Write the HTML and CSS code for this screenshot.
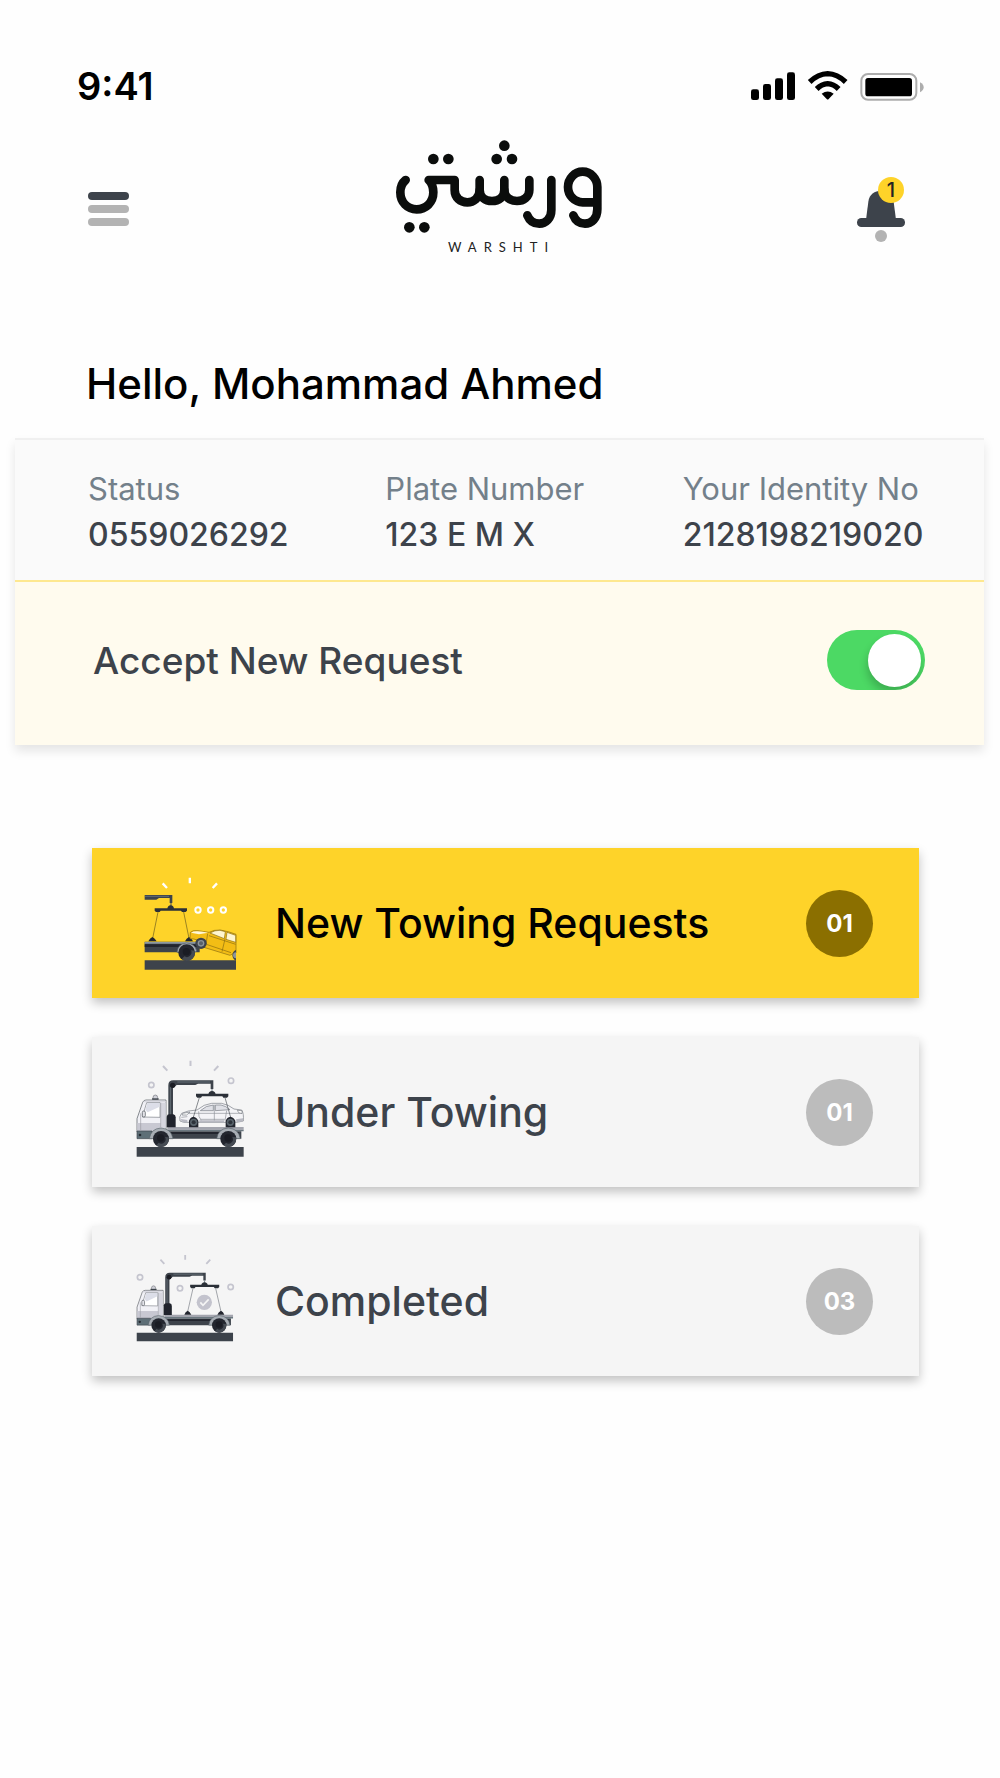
FILE: index.html
```html
<!DOCTYPE html>
<html lang="en">
<head>
<meta charset="utf-8">
<meta name="viewport" content="width=device-width, initial-scale=1">
<title>Warshti</title>
<link rel="stylesheet" href="styles.css">
</head>
<body>
<svg class="sprite" aria-hidden="true">
  <defs>
    <!-- Flatbed truck with crane, shared by two of the cards -->
    <g id="truck">
      <g stroke="#c5c5cf" stroke-width="6" fill="none">
        <path d="M199.500 32V48M117 48L130 62M283 48L270 62"/>
      </g>
      <path fill="#3d434b" d="M38 291H359V320H38Z"/>
      <path fill="#a3a5ae" d="M130 231H359V239H130Z"/>
      <path fill="#6b7880" d="M130 239H359V244H130Z"/>
      <path fill="#3d434b" d="M130 244H352V266H130Z"/>
      <path fill="#22252e" d="M140 246H344V252H140Z"/>
      <path fill="#3d434b" d="M133 200V106Q133 91 148 91H268V117H260V101H222L214 105H158L147 114V200Z"/>
      <path stroke="#77838b" stroke-width="2" fill="none" d="M139 196V110M160 96H258"/>
      <circle cx="146" cy="106" r="8" fill="#1b1d24"/>
      <path stroke="#77838b" stroke-width="3" d="M264 117V125"/>
      <path fill="#2b3038" d="M253 133Q254 124 264 123Q274 124 275 133ZM216 131H313V139L309 143H298L295 139H234L231 143H220L216 139Z"/>
      <path fill="#20232c" d="M128 232V200Q129 193 136 193H148Q155 194 155 202V232Z"/>
      <path fill="#d0d1d9" stroke="#77787f" stroke-width="2" d="M87 149V143Q87 135 94 135Q101 135 101 143V149Z"/>
      <path fill="#3d434b" d="M84 145H104V149H84Z"/>
      <path fill="#f1f1f6" stroke="#4b5158" stroke-width="2" d="M39 246V206L56 157Q59 150 66 150H126V246Z"/>
      <path fill="#d6d6df" d="M111 158H125V234H111Z"/>
      <path fill="#c8c8d2" d="M40 219H110V243H40Z"/>
      <path fill="#d9d9e1" d="M61 152H125V157H59Z"/>
      <path fill="#fff" stroke="#777b83" stroke-width="2" d="M55 201L68 158H108V202Z"/>
      <path fill="#dcdee8" d="M107 159V170L71 187L64 180L70 159Z"/>
      <path stroke="#9a9ca5" stroke-width="2" fill="none" d="M110 158V232M50 190V240"/>
      <rect x="55" y="183" width="9" height="18" rx="4" fill="#e4e4ea" stroke="#4b5158" stroke-width="2"/>
      <path fill="#5e6f77" stroke="#3d434b" stroke-width="2" d="M39 243H84V266H39Z"/>
      <circle cx="48" cy="255" r="4" fill="#252b32"/>
      <path id="fender" fill="#a7adb4" stroke="#59636b" stroke-width="2" d="M76 266Q80 236 111 234Q142 236 147 266L135 266Q130 248 111 247Q92 248 88 266Z"/>
      <use href="#fender" x="202"/>
      <g id="wheel">
        <circle cx="111" cy="267" r="24" fill="#23262f"/>
        <path fill="#454b53" d="M111 291A24 24 0 0 0 134 262L123 261A13 13 0 0 1 104 278L97 286A24 24 0 0 0 111 291Z"/>
        <circle cx="110" cy="264" r="11" fill="#1a1c24"/>
      </g>
      <use href="#wheel" x="202"/>
    </g>
  </defs>
</svg>

<div class="status-bar">
  <time class="clock">9:41</time>
  <svg class="status-icons" viewBox="60 30 525 96" role="img" aria-label="Signal, Wi-Fi and battery">
    <rect x="63" y="88" width="24" height="32" rx="7"/>
    <rect x="99" y="72" width="24" height="48" rx="7"/>
    <rect x="135" y="55" width="24" height="65" rx="7"/>
    <rect x="171" y="37" width="24" height="83" rx="7"/>
    <path fill="none" stroke="#000" stroke-width="16" d="M239 66Q264 42 293 41Q322 42 347 66M260 87Q275 72 293 71Q311 72 326 87"/>
    <path d="M275 101Q293 88 311 101L296 117Q293 120 290 117Z"/>
    <rect x="394" y="42" width="165" height="77" rx="20" fill="none" stroke="#adadad" stroke-width="6"/>
    <rect x="406" y="54" width="140" height="55" rx="8"/>
    <path fill="#adadad" d="M570 67Q581 73 581 82Q581 91 570 97Z"/>
  </svg>
</div>

<header class="header">
  <button class="icon-button menu" type="button" aria-label="Menu">
    <span class="bar bar-dark"></span>
    <span class="bar"></span>
    <span class="bar"></span>
  </button>
  <a class="brand" href="#">
    <svg class="brand-mark" viewBox="70 24 630 294" role="img" aria-label="ورشتي">
      <g fill="none" stroke="#0b0d0c" stroke-width="26" stroke-linecap="round" stroke-linejoin="round">
        <path d="M680 217H636A44 46 0 1 1 680 171V238C680 266 662 281 643 281C627 281 614 272 608 256"/>
        <path d="M542 150V240C542 266 525 281 506 281C488 281 476 271 470 256"/>
        <path d="M476 150V180C476 201 458 213 439 213C419 213 401 201 401 180V150"/>
        <path d="M401 180C401 201 384 213 364 213C344 213 327 201 327 180V150"/>
        <path d="M327 180C327 204 308 217 290 217C269 217 252 203 252 180V150H174C184 160 188 172 188 187C188 217 166 238 138 238C110 238 89 217 89 187C89 172 95 158 105 150"/>
      </g>
      <g fill="#0b0d0c">
        <circle cx="401" cy="47" r="16"/><circle cx="378" cy="87" r="16"/><circle cx="424" cy="87" r="16"/>
        <circle cx="188" cy="87" r="16"/><circle cx="233" cy="87" r="16"/>
        <circle cx="116" cy="292" r="16"/><circle cx="161" cy="292" r="16"/>
      </g>
    </svg>
    <span class="brand-name">WARSHTI</span>
  </a>
  <button class="icon-button bell" type="button" aria-label="Notifications">
    <svg class="bell-icon" viewBox="375 345 180 204" aria-hidden="true">
      <path fill="#3d434b" d="M408 480L415 425C418 402 434 392 453 392C472 392 488 402 491 425L498 480Z"/>
      <rect x="381" y="474" width="144" height="27" rx="13" fill="#3d434b"/>
      <circle cx="453" cy="528" r="18" fill="#b3b3b3"/>
    </svg>
    <span class="bell-count">1</span>
  </button>
</header>

<main>
  <h1 class="greeting">Hello, Mohammad Ahmed</h1>

  <section class="panel">
    <dl class="details">
      <div><dt>Status</dt><dd>0559026292</dd></div>
      <div><dt>Plate Number</dt><dd>123 E M X</dd></div>
      <div><dt>Your Identity No</dt><dd>2128198219020</dd></div>
    </dl>
    <div class="accept">
      <label for="accept">Accept New Request</label>
      <input class="switch" id="accept" type="checkbox" role="switch" checked>
    </div>
  </section>

  <nav class="cards">
    <a class="card card-active" href="#">
      <svg class="card-icon" viewBox="-12 8 390 360" aria-hidden="true">
        <path fill="none" stroke="#fff" stroke-width="7" d="M182.500 52V69M101 69L114 83M264 69L251 83"/>
        <g fill="none" stroke="#fff" stroke-width="6"><circle cx="207" cy="149" r="8"/><circle cx="245" cy="149" r="8"/><circle cx="283" cy="149" r="8"/></g>
        <path fill="#3d434b" d="M47 104H130V128H122V113H90L82 118H47Z"/>
        <path stroke="#77838b" stroke-width="2" d="M48 108H120"/>
        <path stroke="#4b5158" stroke-width="3" d="M126 128V137"/>
        <path fill="#2b3038" d="M115 145Q116 136 125 135Q134 136 135 145ZM77 144H174V151L170 155H159L156 151H95L92 155H81L77 151Z"/>
        <path fill="none" stroke="#6a5a1c" stroke-width="2" d="M87 155L71 234M164 155L180 234"/>
        <path fill="#23262f" d="M58 243Q62 234 70 230Q78 234 83 243ZM168 243Q172 234 180 230Q188 234 192 243Z"/>
        <path fill="#3d434b" d="M47 244H222V251H212V276H47Z"/>
        <path fill="#8d98a1" d="M47 245H216V250H47Z"/>
        <path fill="#22252e" d="M47 252H206V260H47Z"/>
        <path fill="#3d434b" d="M47 300H321V328H47Z"/>
        <path fill="#f3bd15" stroke="#8a6c10" stroke-width="2" d="M183 235L184 216Q190 209 207 211L240 216Q254 208 274 209Q302 214 321 222V278L310 281L303 285L228 262Q218 240 194 236Z"/>
        <path fill="#fff6cf" stroke="#8a6c10" stroke-width="2" d="M243 218Q258 209 273 210L289 214L286 235ZM294 216L320 225V246L291 237Z"/>
        <path fill="#fff8d8" d="M186 217Q194 210 222 214L237 217L210 222Z"/>
        <path fill="none" stroke="#8a6c10" stroke-width="2" d="M288 236L279 274M236 220L230 258M232 252L306 277M240 226L320 252"/>
        <circle cx="216" cy="249" r="17" fill="#3d434b"/><circle cx="216" cy="249" r="10" fill="#8c949b"/><circle cx="216" cy="249" r="6" fill="#5a626a"/>
        <path fill="#3d434b" d="M321 269A16 17 0 0 0 321 301Z"/><path fill="#8c949b" d="M321 276A9 9 0 0 0 321 294Z"/>
        <path fill="#a7adb4" stroke="#59636b" stroke-width="2" d="M144 276Q146 250 173 248Q198 250 203 272L197 276Z"/>
        <circle cx="173" cy="277" r="25" fill="#23262f"/>
        <path fill="#454b53" d="M173 302A25 25 0 0 0 197 271L186 270A14 14 0 0 1 166 288L158 297A25 25 0 0 0 173 302Z"/>
        <circle cx="172" cy="274" r="11" fill="#1a1c24"/>
      </svg>
      <span class="card-label">New Towing Requests</span>
      <span class="card-count">01</span>
    </a>
    <a class="card" href="#">
      <svg class="card-icon" viewBox="3 6 390 360" aria-hidden="true">
        <use href="#truck"/>
        <g fill="none" stroke="#c5c5cf" stroke-width="5"><circle cx="82" cy="105" r="8"/><circle cx="321" cy="92" r="8"/></g>
        <path fill="#f4f4f7" stroke="#777b83" stroke-width="2" d="M168 213Q164 200 173 190Q190 181 219 180Q240 162 263 160H293Q314 164 330 177L353 180Q360 190 358 213L338 217H180Z"/>
        <path fill="#dfe0e6" stroke="#777b83" stroke-width="2" d="M229 182Q246 166 268 165V182ZM274 165H291Q306 168 318 179L274 182Z"/>
        <path fill="none" stroke="#8d9097" stroke-width="2" d="M271 164V214M224 184Q222 200 232 212M308 182L303 212M180 190H354M172 202L190 200M230 208H302"/>
        <path fill="#b9bac3" d="M170 207L190 210V217H174ZM226 211H300V217H226ZM336 208L357 205V214L338 217Z"/>
        <path fill="#fff" stroke="#777b83" stroke-width="2" d="M176 190L198 186L188 195H174ZM340 181L354 182V191L344 188Z"/>
        <path fill="none" stroke="#4b5158" stroke-width="2" d="M226 143L208 202M303 143L320 202"/>
        <path fill="#23262f" d="M195 232V212Q199 201 208 200Q218 201 223 212V232ZM305 232V212Q309 201 319 200Q329 201 334 212V232Z"/>
        <circle cx="209" cy="217" r="11" fill="#58636b"/><circle cx="319" cy="217" r="11" fill="#58636b"/>
        <circle cx="209" cy="217" r="6" fill="#2d333b"/><circle cx="319" cy="217" r="6" fill="#2d333b"/>
      </svg>
      <span class="card-label">Under Towing</span>
      <span class="card-count">01</span>
    </a>
    <a class="card" href="#">
      <svg class="card-icon" viewBox="3 2 390 360" aria-hidden="true">
        <use href="#truck" transform="translate(4 15) scale(.9)"/>
        <g fill="none" stroke="#c5c5cf" stroke-width="5"><circle cx="48" cy="111" r="8"/><circle cx="168" cy="144" r="8"/><circle cx="320" cy="140" r="8"/></g>
        <path fill="none" stroke="#777b83" stroke-width="2" d="M207 144L191 214M275 144L291 214"/>
        <path fill="#23262f" d="M181 223Q184 214 191 211Q198 214 202 223ZM280 223Q284 214 291 211Q298 214 301 223Z"/>
        <circle cx="241" cy="186" r="23" fill="#c3c3cd"/>
        <path fill="none" stroke="#f5f5f5" stroke-width="5" d="M229 186L237 195L254 177"/>
      </svg>
      <span class="card-label">Completed</span>
      <span class="card-count">03</span>
    </a>
  </nav>
</main>
</body>
</html>
```

FILE: styles.css
```css
* {
  box-sizing: border-box;
}

body {
  margin: 0;
  min-height: 100vh;
  background: #fefefe;
  color: #3d434b;
  font-family: Inter, "Liberation Sans", sans-serif;
}

a {
  color: inherit;
  text-decoration: none;
}

.sprite {
  display: block;
  width: 0;
  height: 0;
}

/* Status bar */
.status-bar {
  display: flex;
  align-items: center;
  justify-content: space-between;
  padding: 68px 75px 0 77px;
}

.clock {
  color: #000;
  font-size: 38px;
  font-weight: 600;
  line-height: 36px;
}

.status-icons {
  width: 175px;
  height: 32px;
}

/* Header */
.header {
  display: grid;
  grid-template-columns: 1fr auto 1fr;
  align-items: start;
  padding: 34px 85px 0 82px;
}

.icon-button {
  position: relative;
  height: 68px;
  margin-top: 37px;
  border: 0;
  background: none;
  font-family: inherit;
  cursor: pointer;
}

.menu {
  display: flex;
  flex-direction: column;
  justify-content: center;
  gap: 5px;
  padding: 0 6px;
}

.bar {
  width: 41px;
  height: 8px;
  border-radius: 4px;
  background: #b3b3b3;
}

.bar-dark {
  background: #3d434b;
}

.brand {
  display: flex;
  flex-direction: column;
  align-items: center;
}

.brand-mark {
  width: 210px;
  height: 98px;
}

.brand-name {
  padding-left: 6px;
  color: #222;
  font-family: Lato, sans-serif;
  font-size: 13px;
  letter-spacing: 7px;
  line-height: 22px;
}

.bell {
  justify-self: end;
  padding: 0;
}

.bell-icon {
  display: block;
  width: 60px;
  height: 68px;
}

.bell-count {
  position: absolute;
  top: 2px;
  left: 23px;
  width: 26px;
  height: 26px;
  border-radius: 50%;
  background: #fed329;
  color: #222;
  font-size: 20px;
  font-weight: 500;
  line-height: 26px;
}

/* Greeting and driver details */
.greeting {
  margin: 0;
  padding: 101px 86px 29px;
  color: #000;
  font-size: 42px;
  font-weight: 500;
  line-height: 50px;
}

.panel {
  margin: 0 16px 0 15px;
  box-shadow: 0 6px 10px rgba(0, 0, 0, 0.1);
}

.details {
  display: grid;
  grid-template-columns: repeat(3, 1fr);
  margin: 0;
  padding: 26px 4px 22px 73px;
  border-top: 2px solid #f0f0f0;
  background: #fafafa;
  line-height: 46px;
}

.details dt {
  color: #73808a;
  font-size: 31px;
}

.details dd {
  margin: 0;
  font-size: 32px;
  font-weight: 500;
}

.accept {
  display: flex;
  align-items: center;
  justify-content: space-between;
  padding: 48px 59px 55px 78px;
  border-top: 2px solid #fee890;
  background: #fffbee;
  font-size: 37px;
  font-weight: 500;
}

.switch {
  display: flex;
  align-items: center;
  justify-content: flex-end;
  width: 98px;
  height: 60px;
  margin: 0;
  padding: 4px;
  border-radius: 30px;
  background: #4cd964;
  overflow: hidden;
  appearance: none;
  cursor: pointer;
}

.switch::before {
  content: "";
  width: 53px;
  height: 53px;
  border-radius: 50%;
  background: #fff;
  box-shadow: -1px 6px 8px rgba(0, 0, 0, 0.2);
}

.switch:not(:checked) {
  justify-content: flex-start;
  background: #bdbdbd;
}

/* Request cards */
.cards {
  display: flex;
  flex-direction: column;
  gap: 39px;
  margin: 103px 81px 60px 92px;
}

.card {
  display: flex;
  align-items: center;
  gap: 20px;
  padding: 15px 46px 15px 33px;
  background: #f5f5f5;
  box-shadow: 0 5px 10px rgba(0, 0, 0, 0.24);
}

.card-active {
  background: #fed329;
  color: #000;
}

.card-icon {
  flex: none;
  width: 130px;
  height: 120px;
}

.card-label {
  flex: 1;
  font-size: 41px;
  font-weight: 500;
}

.card-count {
  width: 67px;
  border-radius: 50%;
  background: #bcbcbc;
  color: #fff;
  font-size: 24px;
  font-weight: 700;
  line-height: 67px;
  text-align: center;
}

.card-active .card-count {
  background: #8b6f00;
}
```
